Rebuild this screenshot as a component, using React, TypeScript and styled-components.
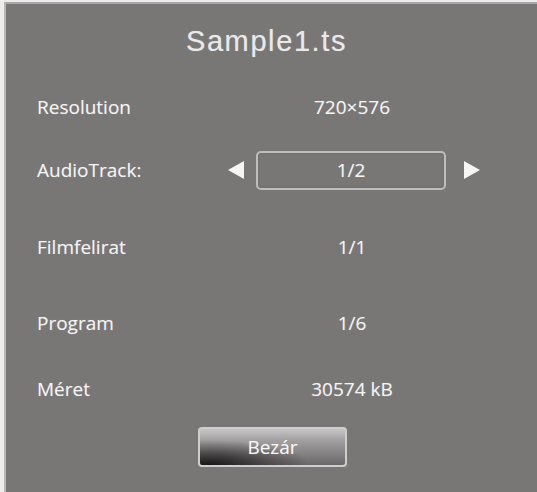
import React from 'react'
import styled, { createGlobalStyle } from 'styled-components'

const GlobalStyle = createGlobalStyle`
  html, body {
    margin: 0;
    padding: 0;
    background: #ededed;
  }
`

type InfoRow = {
  label: string
  value: string
  height: number
}

const rows: InfoRow[] = [
  { label: 'Resolution', value: '720×576', height: 58 },
  { label: 'AudioTrack:', value: '1/2', height: 68 },
  { label: 'Filmfelirat', value: '1/1', height: 86 },
  { label: 'Program', value: '1/6', height: 66 },
  { label: 'Méret', value: '30574 kB', height: 66 },
]

function Arrow({ dir }: { dir: 'left' | 'right' }) {
  const points = dir === 'left' ? '16,0 16,18 0,9' : '0,0 0,18 16,9'
  return (
    <ArrowIcon width="16" height="18" viewBox="0 0 16 18">
      <polygon points={points} fill="#f5f5f5" />
    </ArrowIcon>
  )
}

function App() {
  return (
    <>
      <GlobalStyle />
      <Panel>
        <Title>Sample1.ts</Title>
        {rows.map((row) => (
          <Row key={row.label} $height={row.height}>
            <Label>{row.label}</Label>
            {row.label === 'AudioTrack:' ? (
              <Selector>
                <Arrow dir="left" />
                <ValueBox>{row.value}</ValueBox>
                <Arrow dir="right" />
              </Selector>
            ) : (
              <Value>{row.value}</Value>
            )}
          </Row>
        ))}
        <Footer>
          <CloseButton>Bezár</CloseButton>
        </Footer>
      </Panel>
    </>
  )
}

export default App

const Panel = styled.div`
  margin: 2px 0 0 4px;
  height: 488px;
  background: #797676;
  border-left: 2px solid #b9b7b7;
  border-top: 2px solid #a9a7a7;
  display: flex;
  flex-direction: column;
  padding-left: 31px;
  font-family: 'Open Sans', 'Liberation Sans', sans-serif;
  color: #f4f4f4;
`

const Title = styled.div`
  height: 74px;
  display: flex;
  align-items: center;
  justify-content: center;
  margin-left: -31px;
  padding-right: 10px;
  font-family: 'Liberation Sans', Arial, sans-serif;
  font-size: 29px;
  letter-spacing: 1.6px;
  color: #e9e9e9;
  text-shadow: 0 0 1px rgba(255, 255, 255, 0.4);
`

const Row = styled.div<{ $height: number }>`
  height: ${({ $height }) => $height}px;
  display: flex;
  align-items: center;
  font-size: 19px;
  text-shadow: 0 0 1px rgba(255, 255, 255, 0.3);
`

const Label = styled.div`
  width: 185px;
`

const Value = styled.div`
  width: 260px;
  text-align: center;
`

const Selector = styled.div`
  width: 260px;
  display: flex;
  align-items: center;
  padding-left: 6px;
  box-sizing: border-box;
`

const ArrowIcon = styled.svg`
  flex: none;
`

const ValueBox = styled.div`
  width: 190px;
  height: 39px;
  box-sizing: border-box;
  margin: 0 18px 0 12px;
  border: 2px solid #bebcbc;
  border-radius: 5px;
  display: flex;
  align-items: center;
  justify-content: center;
  box-shadow: inset 0 0 3px rgba(0, 0, 0, 0.15);
`

const Footer = styled.div`
  display: flex;
  padding-top: 5px;
  padding-left: 161px;
`

const CloseButton = styled.button`
  width: 149px;
  height: 40px;
  border: 2px solid #cfcdcd;
  border-radius: 4px;
  background: radial-gradient(ellipse 70% 70% at 5% 100%, rgba(15, 13, 13, 0.9) 0%, rgba(15, 13, 13, 0) 100%),
    linear-gradient(to bottom, #c8c6c6 0%, #a3a1a1 30%, #6a6868 100%);
  color: #f7f7f7;
  font-family: 'Open Sans', 'Liberation Sans', sans-serif;
  font-size: 19px;
  padding: 0;
  text-shadow: 0 0 1px rgba(255, 255, 255, 0.3);
`
